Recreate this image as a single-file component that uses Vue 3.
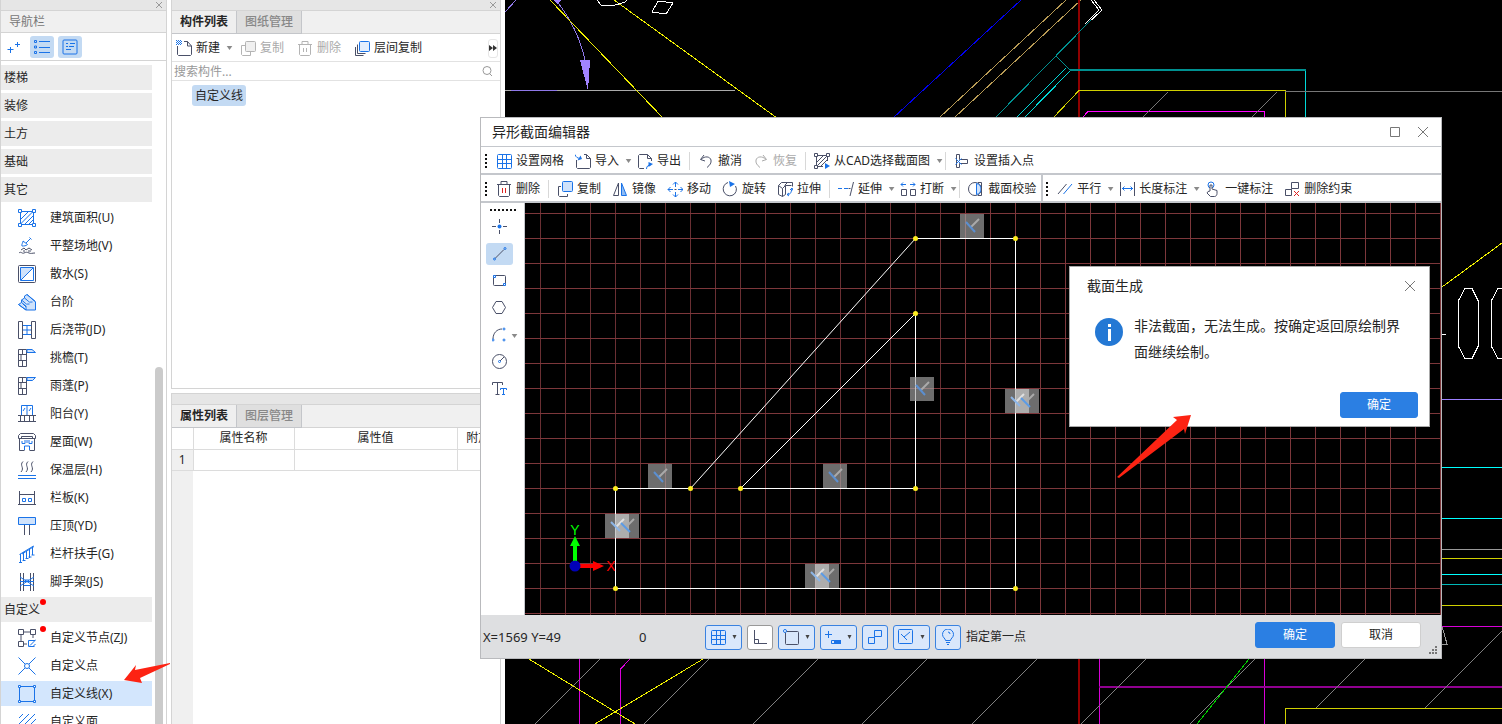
<script setup>
import { ref } from 'vue'

const B = '#1a73e8'
const K = '#4a5068'
const G = '#b4b4b4'
const F = '#cfe2fb'

const navIcons = {
  area: `<path stroke="${B}" d="M2.5 3.500v11M15.500 3.500v11M3.500 2.500h11M3.500 15.500h11M3 10l7-7M3 14.500L14.500 3M7 15l8-8M11 15l4-4"/><path fill="#fff" stroke="${B}" d="M.5.5h3v3h-3zM14.500.5h3v3h-3zM.5 14.500h3v3h-3zM14.500 14.500h3v3h-3z"/>`,
  ground: `<path stroke="${B}" d="M8 6l5-5M11.500.5l2 2M5 5c-1 2-1.500 3-1 4 2 0 4 0 5.500-1.500L5 4z"/><path stroke="${K}" d="M1 16c2-2 3 1 5 0s3-1 5 0 3 0 6 0M3 13l3-2 2 2 3-2 3 2M5 14h2M10 14h3"/>`,
  apron: `<rect x=".5" y=".5" width="17" height="17" rx="1" stroke="${K}"/><path fill="${F}" stroke="none" d="M3 3h12L3 15z"/><path stroke="${B}" d="M2.500 2.500h13v13h-13zM3 15L15 3"/>`,
  steps: `<path fill="${F}" stroke="${B}" d="M.5 11.500l3-2V7l3-2V3l2.500-1.500L17.500 9v8H8zM8 17v-3l-3-3M.5 11.500L8 17M3.500 9.500l5 4M3.500 7l5 4h3M6.500 5l5 4h3M9 1.500l8.500 7"/>`,
  strip: `<path stroke="${K}" d="M.5.5h4v17h-4zM13.500.5h4v17h-4z"/><path stroke="${B}" d="M5 4.500h8M5 9h8M5 13.500h8M9 4.500v9"/>`,
  cornice: `<path stroke="${K}" d="M.5.5h8v17h-8zM4.500.5v5M.5 5.500h8M3 5.500v6M.5 11.500h8M4.500 11.500v6"/><path fill="${F}" stroke="${B}" d="M9 .5h5l3.500 3H9z"/>`,
  canopy: `<path stroke="${K}" d="M.5.5h8v17h-8zM4.500.5v5M.5 5.500h8M3 5.500v6M.5 11.500h8M4.500 11.500v6"/><path fill="${F}" stroke="${B}" d="M9 .5h8.500l-3 3H9z"/>`,
  balcony: `<path stroke="${B}" d="M3.500 10V.5h11V10M9 .5V10M5 6l2-3M11 6l2-3"/><path stroke="${K}" d="M0 10.500h18M2.500 10.500v6M6.500 10.500v6M11.500 10.500v6M15.500 10.500v6M0 16.500h18"/>`,
  roof: `<path stroke="${K}" d="M2.500.5h13l2 2v3h-3v-2h-11v2h-3v-3zM1.500 5.500v12h5M16.500 5.500v12h-5M3 5.500h12"/><path stroke="${B}" d="M4 8v2.500h3V7M14 8v2.500h-3V7M9 7v3M6.500 17v-4h5v4"/>`,
  insulation: `<path stroke="${K}" d="M5 .5c-4 4 2 6-2 10.500M10 .5c-4 4 2 6-2 10.500M15 .5c-4 4 2 6-2 10.500"/><path stroke="${B}" d="M0 14.500h18M0 17.500h18"/>`,
  board: `<path stroke="${K}" d="M1.500 2v13.500M16.500 2v13.500M1.500 5.500h15M0 15.500h18"/><path stroke="${B}" d="M4.500 9.500h3v3h-3zM10.500 9.500h3v3h-3z"/>`,
  coping: `<path fill="${F}" stroke="${B}" d="M.5.5h17v7H.5z"/><path stroke="${K}" d="M6.500 8v10M11.500 8v10"/>`,
  railing: `<path stroke="${B}" d="M1.500 9.500L15.500 1M2.500 9v8M5.500 7v9M8.500 6v8M11.500 4v9M14.500 2v8M1 17.500h3M4.500 15.500h3M7.500 13.500h3M10.500 12h3M13.500 10h3M4 9l12-7.500"/>`,
  scaffold: `<path stroke="${K}" d="M2.500 0v18M5.500 0v18M12.500 0v18M15.500 0v18"/><path stroke="${B}" d="M2 4l14 9M2 13l14-9M2 8.500h14M6 12.500h6M7 7h4"/>`,
  node: `<path stroke="${K}" d="M5.500 3h7M3 5.500v7M15 5.500V9M5.500 15H9M.5.5h5v5h-5zM12.500.5h5v5h-5zM.5 12.500h5v5h-5z"/><path stroke="${B}" d="M17 11.500h-6.500v6h6M12 16.500l6-6M15 17.500l2.500-2.500"/>`,
  point: `<path stroke="${B}" d="M.5.5l6.500 6.500M11 11l6.500 6.500M17.500.5L11 7M7 11L.5 17.500"/><circle cx="9" cy="9" r="2.500" stroke="${B}"/>`,
  line: `<path stroke="${B}" d="M1.500 1.500h15v15h-15z"/><path fill="#fff" stroke="${B}" d="M.5.5h2v2h-2zM15.500.5h2v2h-2zM.5 15.500h2v2h-2zM15.500 15.500h2v2h-2z"/>`,
  face: `<path stroke="${B}" d="M1 5l4-4M1 11L11 1M1 17L17 1M6 18L18 6M12 18l6-6"/>`
}

const icons = {
  sparkle: `<path stroke="${B}" d="M4.500 8v6M1.500 10.500h6M11.500 3v5M9 5.500h5"/>`,
  list: `<path stroke="${B}" d="M.5 1.500h2v2h-2zM.5 7h2v2h-2zM.5 12.500h2v2h-2zM5 2.500h11M5 8.500h11M5 13.500h11"/>`,
  card: `<rect x="1" y="1" width="14" height="14" rx="1" stroke="${B}"/><path stroke="${B}" d="M4 4.500h2M8 4.500h5M4 7.500h2M7 7.500h5M4 10.500h5"/>`,
  fileNew: `<path stroke="${K}" d="M1.500 6v8.500l1 1h12l1-1V6l-4-4.500H8M11.500 1.500V6h4"/><path stroke="${B}" stroke-dasharray="1 1" d="M0 .5h5M1 1.500h5M0 2.500h5M1 3.500h5M0 4.500h5"/>`,
  copyOff: `<path stroke="${G}" d="M5 5.500H1.500v9l1 1h8V12"/><rect x="5.500" y="1.500" width="10" height="10" rx="1" stroke="${G}" fill="#f0f0f0"/>`,
  trashOff: `<path stroke="${G}" d="M1 4.500h14M5 4V1.500h6V4M2.500 4.500v10l1 1h9l1-1v-10M6.500 8v4M9.500 8v4"/>`,
  layers: `<path stroke="${K}" d="M3.500 4.500v9h8M1.500 7v8.500h8" /><rect x="5.500" y="1.500" width="10" height="10" rx="1" stroke="${B}" fill="#e3eefd"/>`,
  search: `<circle cx="8" cy="7.500" r="4" stroke="#999"/><path stroke="#999" d="M10.500 10.500l2.500 2.500"/>`,
  close: `<path stroke="#999" d="M1 1l6 6M7 1L1 7"/>`,
  grid: `<rect x="1.500" y="1.500" width="14" height="14" rx="1" stroke="${B}"/><path stroke="${B}" d="M6.500 1v14M10.500 1v14M1 6.500h14M1 10.500h14"/>`,
  import: `<path stroke="${K}" d="M1.500 7v7.500l1 1h12l1-1V5.500l-4-4H9M11.500 1.500v4h4"/><path stroke="${B}" d="M0 1.500c1 3 2.500 3.500 5 4"/><path fill="${B}" stroke="none" d="M7 6L2.500 7.500 5.500 2.500z"/>`,
  export: `<path stroke="${K}" d="M7 15.500H2.500l-1-1v-12l1-1h8l4 4V8M10.500 1.500v4h4"/><path stroke="${B}" d="M9.500 16c0-3 2-4 4-4"/><path fill="${B}" stroke="none" d="M16 11l-4.500-2v5z"/>`,
  undo: `<path stroke="${K}" d="M6 2L2.500 6.500 7 8M3 6.500C7 2.500 12 3.500 13 7c.5 3-1 5-4 7.500"/>`,
  redo: `<path stroke="#aaa" d="M10 2l3.500 4.500L9 8M13 6.500C9 2.500 4 3.500 3 7c-.5 3 1 5 4 7.500"/>`,
  pick: `<path stroke="${K}" d="M2.500 3v10M3 2.500h10M13.500 4v4M3 13.500h6M3 9l6-6M3 13l10-10M7 13l6-6"/><path fill="#fff" stroke="${K}" d="M.5.5h3v3h-3zM12.500.5h3v3h-3zM.5 12.500h3v3h-3z"/><path fill="${B}" stroke="none" d="M11 10l5 3-5 3z"/>`,
  insertPt: `<path stroke="${K}" d="M2.500 1.500h3v5h8v4h-8v4h-3z"/><path stroke="${B}" d="M1.500 5.500l6 6M1.500 11.500l6-6"/>`,
  trash: `<path stroke="${K}" d="M1 3.500h14M5 3V.5h6V3M2.500 3.500v11l1 1h9l1-1v-11"/><path stroke="#d22" d="M6.500 7v5M9.500 7v5"/>`,
  copy: `<path stroke="${K}" d="M4 5.500H1.500v9l1 1h8V13"/><rect x="5.500" y=".5" width="10" height="10" rx="1" stroke="${B}" fill="${F}"/>`,
  mirror: `<path stroke="${K}" d="M6.500 2v12.500h-5z"/><path stroke="${B}" fill="#8fbcf5" d="M9.500 2v12.500h5z"/>`,
  move: `<path stroke="${B}" d="M8.500 1v5M8.500 11v5M1 8.500h5M11 8.500h5M6 3.500l2.500-2.500 2.500 2.500M6 13.500l2.500 2.500 2.500-2.500M3.500 6L1 8.500 3.500 11M13.500 6L16 8.500 13.500 11"/><path stroke="${K}" d="M7.500 8.500h2"/>`,
  rotate: `<path stroke="${K}" d="M6 1.500A6.500 6.500 0 1 0 10 14.500A6.500 6.500 0 0 0 13.500 5"/><path fill="${B}" stroke="none" d="M7 0l6 3-5 3z"/>`,
  stretch: `<path stroke="${K}" d="M1.500 4.500v9l4 2v-8zM1.500 4.500l3-3h11v4M5.500 7.500l3-3h6M8.500 4.500v9M5.500 15.500l3-2M10.500 1.500l-3 3"/><path stroke="${B}" d="M10 13.500c4 0 4-2 5-6M13 9l2-2 1 2.500M12 12l-2 1.500 2 1.500"/>`,
  extend: `<path stroke="${B}" d="M0 7.500h4M6 7.500h4"/><path stroke="${K}" d="M10.500 7.500h2M15.500 1l-3.500 14"/>`,
  breakUp: `<path stroke="${K}" d="M6.500 8.500h-5v6h5zM15.500 8.500h-5v6h5z"/><path stroke="${B}" d="M1 3.500h5M10 3.500h5M3 1.500l-2 2 2 2M13 1.500l2 2-2 2"/>`,
  check: `<circle cx="7" cy="8" r="6.500" stroke="${K}"/><path fill="${F}" stroke="${B}" d="M8.500 2.500c6 1 6 10 0 11z"/><path stroke="${K}" d="M10 1.500h3.500v13H10"/>`,
  parallel: `<path stroke="${K}" d="M1 13L9.500 3"/><path stroke="${B}" d="M6.500 13L15 3"/>`,
  length: `<path stroke="${K}" d="M1.500 1v14M15.500 1v14"/><path stroke="${B}" d="M3 7.500h11M5.500 5.500l-2 2 2 2M11.500 5.500l2 2-2 2"/>`,
  touch: `<circle cx="6" cy="4" r="3" stroke="${B}"/><path stroke="${K}" fill="#fff" d="M5 10V4h2v4l5 1.500v3c0 1.500-1 3-2.500 3h-4L2 12l1-1.500z"/>`,
  unbind: `<path stroke="${K}" d="M7.500 1.500h7v6h-7zM7.500 7.500v7h-6v-6h6"/><path stroke="#d22" d="M10 10l5 5M15 10l-5 5"/>`,
  dotTool: `<path stroke="${K}" d="M7.500 0v4M7.500 11v4M0 7.500h4M11 7.500h4"/><circle cx="7.500" cy="7.500" r="2" fill="${B}" stroke="none"/>`,
  lineTool: `<path stroke="${K}" d="M3 12.500L12 3.500"/><circle cx="2.500" cy="13" r="1" stroke="${B}"/><circle cx="13" cy="2.500" r="1" stroke="${B}"/>`,
  rectTool: `<rect x="1.500" y="2.500" width="12" height="10" rx="1" stroke="${K}"/><path stroke="${B}" fill="#fff" d="M1.500 2.500h2v2h-2zM11.500 10.500h2v2h-2z"/>`,
  hexTool: `<path stroke="${K}" d="M4 1.500h6l3.500 6-3.500 6H4L.5 7.500z"/>`,
  arcTool: `<path stroke="${K}" d="M1 12C1 6 5 2 10 2"/><circle cx="1" cy="13" r="1" stroke="${B}"/><circle cx="12" cy="2" r="1" stroke="${B}"/><circle cx="12" cy="13" r="1" stroke="${B}"/>`,
  circleTool: `<circle cx="7.500" cy="7.500" r="7" stroke="${K}"/><path stroke="${K}" d="M8 7l4-4"/><circle cx="7.500" cy="7.500" r="1" stroke="${B}"/>`,
  textTool: `<path stroke="${K}" d="M.5 4V1.500h10V4M5.500 1.500v12M3.500 13.500h4"/><path stroke="${B}" d="M8.500 9V7.500h6V9M11.500 7.500v6M10 13.500h3"/>`,
  ortho: `<path stroke="${K}" d="M2.500 1v13.500H15M2.500 10.500h4v4"/>`,
  snapRect: `<rect x="2.500" y="2.500" width="13" height="13" rx="1" stroke="${K}"/><circle cx="2" cy="2" r="1.500" stroke="${B}" fill="#fff"/>`,
  dynInput: `<path stroke="${B}" d="M3.500 2v7M0 5.500h7M6.500 11.500h9v3h-9z"/><path fill="${B}" stroke="none" d="M9 11h7v4H9z"/>`,
  link: `<path stroke="${B}" d="M7.500 1.500h7v6h-7zM7.500 7.500v7h-6v-6h6"/>`,
  constraint: `<rect x=".5" y=".5" width="14" height="14" rx="1" stroke="${B}"/><path stroke="${B}" d="M3 5l6 6M6 8l6-5"/>`,
  bulb: `<path stroke="${B}" d="M5.500 11.500c0-2-3-3-3-6a5.500 5.500 0 0 1 11 0c0 3-3 4-3 6zM6 13.500h4M7 15.500h2M8 3a2 2 0 0 1 2 2"/>`
}

const groups = ['楼梯', '装修', '土方', '基础', '其它']
const others = [
  { icon: 'area', text: '建筑面积(U)' },
  { icon: 'ground', text: '平整场地(V)' },
  { icon: 'apron', text: '散水(S)' },
  { icon: 'steps', text: '台阶' },
  { icon: 'strip', text: '后浇带(JD)' },
  { icon: 'cornice', text: '挑檐(T)' },
  { icon: 'canopy', text: '雨蓬(P)' },
  { icon: 'balcony', text: '阳台(Y)' },
  { icon: 'roof', text: '屋面(W)' },
  { icon: 'insulation', text: '保温层(H)' },
  { icon: 'board', text: '栏板(K)' },
  { icon: 'coping', text: '压顶(YD)' },
  { icon: 'railing', text: '栏杆扶手(G)' },
  { icon: 'scaffold', text: '脚手架(JS)' }
]
const customs = [
  { icon: 'node', text: '自定义节点(ZJ)', dot: true },
  { icon: 'point', text: '自定义点' },
  { icon: 'line', text: '自定义线(X)' },
  { icon: 'face', text: '自定义面' }
]
const selected = ref('自定义线(X)')

const listTools = [
  { icon: 'fileNew', text: '新建', caret: true },
  { icon: 'copyOff', text: '复制', off: true },
  { icon: 'trashOff', text: '删除', off: true },
  { icon: 'layers', text: '层间复制' }
]
const fileTools = [
  { icon: 'grid', text: '设置网格' },
  { icon: 'import', text: '导入', caret: true },
  { icon: 'export', text: '导出' },
  { sep: true },
  { icon: 'undo', text: '撤消' },
  { icon: 'redo', text: '恢复', off: true },
  { sep: true },
  { icon: 'pick', text: '从CAD选择截面图', caret: true },
  { sep: true },
  { icon: 'insertPt', text: '设置插入点' }
]
const editTools = [
  { icon: 'trash', text: '删除' },
  { sep: true },
  { icon: 'copy', text: '复制' },
  { icon: 'mirror', text: '镜像' },
  { icon: 'move', text: '移动' },
  { icon: 'rotate', text: '旋转' },
  { icon: 'stretch', text: '拉伸' },
  { sep: true },
  { icon: 'extend', text: '延伸', caret: true },
  { icon: 'breakUp', text: '打断', caret: true },
  { sep: true },
  { icon: 'check', text: '截面校验' }
]
const markTools = [
  { icon: 'parallel', text: '平行', caret: true },
  { icon: 'length', text: '长度标注', caret: true },
  { icon: 'touch', text: '一键标注' },
  { icon: 'unbind', text: '删除约束' }
]
const drawTools = ['dotTool', 'lineTool', 'rectTool', 'hexTool', 'arcTool', 'circleTool', 'textTool']
const drawTool = ref('lineTool')
const snapTools = [
  { icon: 'grid', caret: true },
  { icon: 'ortho', off: true },
  { icon: 'snapRect', caret: true },
  { icon: 'dynInput', caret: true },
  { icon: 'link' },
  { icon: 'constraint', caret: true },
  { icon: 'bulb' }
]

const keyword = ref('')

// section outline, on the 25px grid
const vertices = [
  [615, 488], [690, 488], [915, 238], [1015, 238], [1015, 588], [615, 588],
  [740, 488], [915, 313], [915, 488]
]
const marks = [[648, 464], [823, 464], [910, 377], [960, 214]]
const doubleMarks = [[605, 514], [805, 564], [1005, 389]]
const gridX = Array.from({ length: 37 }, (_, i) => 540 + i * 25)
const gridY = Array.from({ length: 17 }, (_, i) => 213 + i * 25)
</script>

<template>
  <div class="workspace">
    <aside class="nav">
      <div class="grip">
        <button class="close" aria-label="关闭"><svg viewBox="0 0 8 8" v-html="icons.close"></svg></button>
      </div>
      <h2 class="nav-title">导航栏</h2>
      <div class="nav-tools">
        <button class="sq" aria-label="新增"><svg viewBox="0 0 16 16" v-html="icons.sparkle"></svg></button>
        <button class="sq on" aria-label="列表"><svg viewBox="0 0 16 16" v-html="icons.list"></svg></button>
        <button class="sq on" aria-label="卡片"><svg viewBox="0 0 16 16" v-html="icons.card"></svg></button>
      </div>
      <div class="nav-body">
        <div class="nav-list">
          <div v-for="g in groups" :key="g" class="group">{{ g }}</div>
          <button v-for="o in others" :key="o.text" class="entry" @click="selected = o.text">
            <svg viewBox="0 0 18 18" v-html="navIcons[o.icon]"></svg>{{ o.text }}
          </button>
          <div class="group">自定义<i class="dot"></i></div>
          <button
            v-for="o in customs"
            :key="o.text"
            class="entry"
            :class="{ selected: selected === o.text }"
            @click="selected = o.text"
          >
            <svg viewBox="0 0 18 18" v-html="navIcons[o.icon]"></svg>{{ o.text }}<i v-if="o.dot" class="dot"></i>
          </button>
        </div>
        <div class="scroll"></div>
      </div>
    </aside>

    <div class="middle">
      <section class="panel components">
        <div class="grip">
          <button class="close" aria-label="关闭"><svg viewBox="0 0 8 8" v-html="icons.close"></svg></button>
        </div>
        <div class="tabs">
          <button class="tab active">构件列表</button>
          <button class="tab">图纸管理</button>
        </div>
        <div class="list-tools">
          <button v-for="t in listTools" :key="t.text" class="tool" :class="{ off: t.off }">
            <svg viewBox="0 0 16 16" v-html="icons[t.icon]"></svg>{{ t.text }}<i v-if="t.caret" class="caret"></i>
          </button>
          <button class="more" aria-label="更多">
            <svg viewBox="0 0 8 8"><path d="M0 1l4 3-4 3zM4 1l4 3-4 3z" /></svg>
          </button>
        </div>
        <label class="search">
          <input v-model="keyword" type="text" placeholder="搜索构件..." aria-label="搜索构件" />
          <svg viewBox="0 0 16 16" v-html="icons.search"></svg>
        </label>
        <div class="tree"><button class="leaf">自定义线</button></div>
      </section>

      <section class="panel props">
        <div class="grip"></div>
        <div class="tabs">
          <button class="tab active">属性列表</button>
          <button class="tab">图层管理</button>
        </div>
        <table>
          <thead>
            <tr><th class="num"></th><th class="name">属性名称</th><th class="value">属性值</th><th>附加</th></tr>
          </thead>
          <tbody>
            <tr><td class="num">1</td><td></td><td></td><td></td></tr>
          </tbody>
        </table>
        <div class="gutter"></div>
      </section>
    </div>

    <main class="cad">
      <svg viewBox="505 0 997 724" preserveAspectRatio="xMinYMin slice" fill="none" shape-rendering="crispEdges">
        <path stroke="#8f78e8" d="M505 12L516 0M556 0Q578 28 585 60M511 90.500h46" />
        <path fill="#a183ff" d="M580 60h10l-2 31zM554 0h7l-4 4z" />
        <path stroke="#aaa" d="M505 90.500h6M557 90.500h178" />
        <path stroke="#f0f000" d="M550 0L663 118M614 0L777 118" />
        <path stroke="#fff" d="M597 0l4 5 11 1 13-4 2-2M658 1l15 2-7 11-14-2zM1091 0l8 10-14 14M1094 0l8 10-15 14" />
        <path stroke="#0000f0" d="M1021 0L893 118" />
        <path stroke="#b89b55" d="M1066 0L939 118M1081 0L954 118" />
        <path stroke="#900000" stroke-width="2" d="M1079 0v724" />
        <path stroke="#009090" d="M1091 20L995 118M1056 56l14 14" />
        <path stroke="#00d8d8" d="M1066 68l-50 50M1070 71l-46 47M1305.500 70v48" />
        <path stroke="#009090" stroke-width="2" d="M1070 70h236" />
        <path stroke="#d0d000" d="M1053 118l26-27.500h206.500v28" />
        <path stroke="#f0f" d="M1082 118l6-6.500h176.500v7" />
        <path stroke="#777" d="M1285 91.500h217M1168 92l-26 26M1277 92l-26 26" />
        <path stroke="#f0f000" d="M1442 287l60-44" />
        <path stroke="#fff" d="M1465 288.500h7l6 12v46l-6 12h-7l-6.500-12v-46zM1502 288.500h-4l-6.500 12v46l6.500 12h4M1442 334.500h4" />
        <path stroke="#9d80ff" d="M1442 399.500h60" />
        <path stroke="#0ff" d="M1442 467.500h60M1442 518.500h60M1442 574.500h60" />
        <path stroke="#00b8b8" d="M1442 584.500h60" />
        <path stroke="#999" d="M1442 549.500h60M1442 626l5 18h-5" />
        <path stroke="#d0d000" d="M1442 558.500h60M1442 605.500h60M1502 708.500h-216.500v16" />
        <path stroke="#d800d8" d="M1442 626.500h60M1099.500 659v65M1264.500 659v65M579.500 659v65M630 659l-9.500 10v55" />
        <path stroke="#900090" stroke-width="2" d="M1099 687h403" />
        <path stroke="#808080" d="M600 659l-65 65M709 659l-65 65M818 659l-65 65M927 659l-65 65M1037 659l-65 65M1146 659l-65 65M1255 659l-65 65M1365 659l-49 49M1502 631l-77 77" />
        <path stroke="#00d000" d="M1249 659l-52 65" />
        <path stroke="#f0f000" d="M529 659l106 65M703 659l-108 65" />
      </svg>
    </main>

    <div class="editor" role="dialog" aria-label="异形截面编辑器">
      <header class="editor-head">
        <h1>异形截面编辑器</h1>
        <button class="win" aria-label="最大化"><svg viewBox="0 0 12 12"><path d="M1.500 1.500h9v9h-9z" /></svg></button>
        <button class="win" aria-label="关闭"><svg viewBox="0 0 12 12"><path d="M1 1l10 10M11 1L1 11" /></svg></button>
      </header>
      <div class="bar">
        <div class="bar-group">
          <i class="handle"></i>
          <template v-for="(t, i) in fileTools" :key="i">
            <i v-if="t.sep" class="sep"></i>
            <button v-else class="tool" :class="{ off: t.off }">
              <svg viewBox="0 0 16 16" v-html="icons[t.icon]"></svg>{{ t.text }}<i v-if="t.caret" class="caret"></i>
            </button>
          </template>
        </div>
      </div>
      <div class="bar">
        <div class="bar-group">
          <i class="handle"></i>
          <template v-for="(t, i) in editTools" :key="i">
            <i v-if="t.sep" class="sep"></i>
            <button v-else class="tool">
              <svg viewBox="0 0 16 16" v-html="icons[t.icon]"></svg>{{ t.text }}<i v-if="t.caret" class="caret"></i>
            </button>
          </template>
        </div>
        <div class="bar-group">
          <i class="handle"></i>
          <button v-for="t in markTools" :key="t.text" class="tool">
            <svg viewBox="0 0 16 16" v-html="icons[t.icon]"></svg>{{ t.text }}<i v-if="t.caret" class="caret"></i>
          </button>
        </div>
      </div>
      <div class="editor-body">
        <div class="draw-tools">
          <i class="handle-h"></i>
          <button
            v-for="d in drawTools"
            :key="d"
            class="draw"
            :class="{ on: drawTool === d }"
            :aria-label="d"
            @click="drawTool = d"
          >
            <svg viewBox="0 0 16 16" v-html="icons[d]"></svg><i v-if="d === 'arcTool'" class="caret"></i>
          </button>
        </div>
        <div class="sheet">
          <svg viewBox="525 203 916 412" preserveAspectRatio="xMinYMin slice" fill="none">
            <path v-for="x in gridX" :key="'x' + x" :stroke="x < 960 ? '#6a2f33' : '#7d373b'" :d="`M${x + 0.5} 203V615`" />
            <path v-for="y in gridY" :key="'y' + y" stroke="#7d373b" :d="`M525 ${y + 0.5}H1441`" />
            <g transform="translate(.5 .5)" stroke="#fff">
              <path d="M615 488H690L915 238H1015V588H615z" />
              <path d="M740 488L915 313V488z" />
            </g>
            <circle v-for="v in vertices" :key="v.join()" :cx="v[0] + 0.5" :cy="v[1] + 0.5" r="2.500" fill="#ffef20" />
            <g v-for="m in marks" :key="m.join()" :transform="`translate(${m[0]} ${m[1]})`">
              <rect width="24" height="24" fill="#a8a8a8" fill-opacity=".65" />
              <path stroke="#aaa" stroke-width="2" d="M11 13l8-8" />
              <path stroke="#5b8fd0" stroke-width="2" d="M6 8l9 10" />
            </g>
            <g v-for="m in doubleMarks" :key="m.join()" :transform="`translate(${m[0]} ${m[1]})`">
              <rect width="34" height="24" fill="#a8a8a8" fill-opacity=".65" />
              <rect x="10" width="14" height="24" fill="#d0d0d0" fill-opacity=".65" />
              <path stroke="#e0e0e0" stroke-width="2" d="M11 13l8-8" />
              <path stroke="#aaa" stroke-width="2" d="M21 13l8-8" />
              <path stroke="#8db6e8" stroke-width="2" d="M6 8l9 9" />
              <path stroke="#5b9be6" stroke-width="2" d="M16 9l9 9" />
            </g>
            <path fill="#0f0" d="M573 562v-16h-3l5-10 5 10h-3v16z" />
            <path fill="#f00" d="M580 564h13v-3l11 5-11 5v-3h-13z" />
            <circle cx="575" cy="566" r="5.500" fill="#0000b8" />
            <text class="axis y" x="575" y="535">Y</text>
            <text class="axis x" x="611" y="571">X</text>
          </svg>
        </div>
      </div>
      <footer class="status">
        <span class="coord">X=1569 Y=49</span>
        <span class="angle">0</span>
        <div class="snaps">
          <button v-for="s in snapTools" :key="s.icon" class="snap" :class="{ off: s.off }" :aria-label="s.icon">
            <svg viewBox="0 0 16 16" v-html="icons[s.icon]"></svg><i v-if="s.caret" class="caret"></i>
          </button>
        </div>
        <span class="hint">指定第一点</span>
        <div class="actions">
          <button class="btn primary">确定</button>
          <button class="btn">取消</button>
        </div>
        <svg class="resize" viewBox="0 0 9 9"><path d="M6 0h2v2H6zM6 3h2v2H6zM3 3h2v2H3zM6 6h2v2H6zM3 6h2v2H3zM0 6h2v2H0z" /></svg>
      </footer>
    </div>

    <div class="message" role="alertdialog" aria-label="截面生成">
      <header>
        <h2>截面生成</h2>
        <button class="win" aria-label="关闭"><svg viewBox="0 0 12 12"><path d="M1 1l10 10M11 1L1 11" /></svg></button>
      </header>
      <div class="message-body">
        <svg viewBox="0 0 28 28"><circle cx="14" cy="14" r="14" /><path d="M13 6h3v3h-3zM13 11h3v12h-3z" /></svg>
        <p>非法截面，无法生成。按确定返回原绘制界面继续绘制。</p>
      </div>
      <footer><button class="btn primary">确定</button></footer>
    </div>

    <svg class="arrow nav-arrow" viewBox="124 660 48 26">
      <path d="M124 680l12-15-1 5 35-7v1l-30 14 2 5z" />
    </svg>
    <svg class="arrow msg-arrow" viewBox="1116 412 78 68">
      <path d="M1191 415l-18 2 4 3-60 57 2 1 65-49 1 5z" />
    </svg>
  </div>
</template>

<style>
body {
  margin: 0;
  background: #fff;
}
</style>

<style scoped>
.workspace {
  position: relative;
  display: flex;
  height: 100vh;
  overflow: hidden;
  font-family: "Noto Sans", "Noto Sans CJK SC", sans-serif;
  font-size: 12px;
  line-height: 16px;
  color: #262626;
}
.workspace * {
  box-sizing: border-box;
}
button {
  border: none;
  padding: 0;
  background: none;
  font: inherit;
  color: inherit;
  white-space: nowrap;
}
h1, h2, p {
  margin: 0;
  font-weight: 400;
}
svg {
  display: block;
  flex: none;
  fill: none;
}
.grip {
  display: flex;
  flex: none;
  justify-content: flex-end;
  align-items: center;
  height: 11px;
  padding-right: 3px;
  background: #e6e6e6;
  border-bottom: 1px solid #d4d4d4;
}
.close svg {
  width: 8px;
  height: 8px;
}
.caret {
  width: 7px;
  height: 4px;
  background: #8a8a8a;
  clip-path: polygon(10% 0, 90% 0, 50% 100%);
}
.dot {
  align-self: flex-start;
  width: 6px;
  height: 6px;
  border-radius: 50%;
  background: #f00;
}

.nav {
  display: flex;
  flex-direction: column;
  flex: none;
  width: 167px;
  border: 1px solid #d4d4d4;
  border-width: 0 1px;
}
.nav-title {
  flex: none;
  height: 22px;
  padding-left: 8px;
  border-bottom: 1px solid #d4d4d4;
  background: #f0f0f0;
  font-size: 12px;
  line-height: 21px;
  color: #777;
}
.nav-tools {
  display: flex;
  flex: none;
  align-items: center;
  gap: 4px;
  height: 28px;
  padding-left: 1px;
  border-bottom: 1px solid #d4d4d4;
}
.sq {
  display: grid;
  place-items: center;
  width: 24px;
  height: 22px;
  border-radius: 3px;
}
.sq.on {
  background: #c3daf3;
}
.sq svg {
  width: 16px;
  height: 16px;
}
.nav-body {
  display: flex;
  flex: 1;
  min-height: 0;
}
.nav-list {
  display: flex;
  flex: 1;
  flex-direction: column;
  gap: 3px;
  padding-top: 4px;
  overflow: hidden;
}
.group,
.entry {
  display: flex;
  flex: none;
  align-items: center;
  height: 25px;
}
.group {
  padding-left: 3px;
  background: #ececec;
}
.group .dot {
  margin-top: 2px;
}
.entry {
  position: relative;
  padding-left: 17px;
  text-align: left;
}
.entry.selected {
  background: #d3e6fd;
}
.entry svg {
  width: 18px;
  height: 18px;
  margin-right: 14px;
}
.entry .dot {
  position: absolute;
  left: 39px;
  top: 1px;
}
.scroll {
  width: 8px;
  margin: 306px 3px 0;
  border-radius: 4px 4px 0 0;
  background: #cbcbcb;
}

.middle {
  display: flex;
  flex-direction: column;
  flex: none;
  gap: 4px;
  width: 338px;
  padding: 0 4px;
}
.panel {
  display: flex;
  flex-direction: column;
  border: 1px solid #d4d4d4;
}
.components {
  flex: none;
  height: 389px;
  border-top: none;
}
.props {
  flex: 1;
  border-bottom: none;
}
.tabs {
  display: flex;
  flex: none;
  height: 23px;
  border-bottom: 1px solid #d4d4d4;
  background: #f0f0f0;
}
.tab {
  width: 65px;
  height: 23px;
  border: 1px solid #c4c6ca;
  border-width: 0 1px 1px 0;
  background: #dfdfdf;
  font-weight: 500;
  color: #888;
}
.tab.active {
  background: #efefef;
  font-weight: 700;
  color: #262626;
}
.list-tools {
  display: flex;
  flex: none;
  align-items: center;
  gap: 3px;
  height: 28px;
  padding-top: 1px;
  border-bottom: 1px solid #e2e2e2;
}
.tool {
  display: flex;
  flex: none;
  align-items: center;
  gap: 4px;
  height: 24px;
  padding: 0 5px;
}
.list-tools .tool {
  padding: 0 6px 0 4px;
}
.tool svg {
  width: 16px;
  height: 16px;
}
.tool.off {
  color: #aaa;
}
.tool .caret {
  margin: 0 -6px 0 2px;
}
.more {
  display: grid;
  place-items: center;
  width: 10px;
  height: 19px;
  margin: 0 2px 0 auto;
  border: 1px solid #e6e6e6;
  border-radius: 3px;
}
.more svg {
  width: 8px;
  height: 8px;
  fill: #333;
}
.search {
  display: flex;
  flex: none;
  align-items: center;
  height: 19px;
  padding: 0 5px 0 2px;
  border-bottom: 1px solid #e2e2e2;
}
.search input {
  flex: 1;
  min-width: 0;
  height: 18px;
  padding: 0;
  border: none;
  outline: none;
  font: inherit;
}
.search input::placeholder {
  color: #999;
}
.search svg {
  width: 16px;
  height: 16px;
}
.tree {
  padding: 4px 20px;
}
.leaf {
  height: 21px;
  padding: 0 3px;
  border-radius: 3px;
  background: #c3daf3;
}
table {
  width: 100%;
  table-layout: fixed;
  border-collapse: collapse;
}
th, td {
  height: 21px;
  padding: 0;
  border: 1px solid #dcdcdc;
  border-width: 0 1px 1px 0;
  font-weight: 400;
  text-align: center;
}
.num {
  width: 21px;
}
td.num {
  background: #f0f0f0;
}
.name {
  width: 101px;
}
.value {
  width: 163px;
}
.gutter {
  flex: 1;
  width: 21px;
  background: #f0f0f0;
}

.cad {
  flex: 1;
  min-width: 0;
  background: #000;
}
.cad svg {
  width: 100%;
  height: 100%;
}

.editor {
  position: absolute;
  left: 480px;
  right: 60px;
  top: 117px;
  bottom: 65px;
  display: flex;
  flex-direction: column;
  border: 1px solid #b9babd;
  background: #fff;
}
.editor-head {
  display: flex;
  flex: none;
  align-items: center;
  gap: 16px;
  height: 29px;
  padding: 0 12px 0 11px;
  border-bottom: 1px solid #c4c7cc;
}
h1 {
  flex: 1;
  font-size: 14px;
  line-height: 20px;
}
.win svg {
  width: 12px;
  height: 12px;
  stroke: #777;
}
.bar {
  display: flex;
  flex: none;
  height: 28px;
  padding-left: 1px;
  border-bottom: 2px solid #c4c7cc;
}
.bar-group {
  display: flex;
  align-items: center;
  gap: 1px;
  padding-top: 2px;
}
.bar-group + .bar-group {
  border-left: 2px solid #c4c7cc;
}
.handle {
  width: 2px;
  height: 14px;
  margin: 0 3px;
  background: repeating-linear-gradient(#111 0 2px, transparent 2px 4px);
}
.sep {
  width: 1px;
  height: 18px;
  margin: 0 2px;
  background: #d8d8d8;
}
.editor-body {
  display: flex;
  flex: 1;
  min-height: 0;
}
.draw-tools {
  display: flex;
  flex: none;
  flex-direction: column;
  gap: 5px;
  width: 44px;
  padding: 6px 0 0 5px;
  border-right: 1px solid #c4c7cc;
}
.handle-h {
  width: 26px;
  height: 2px;
  margin-left: 4px;
  background: repeating-linear-gradient(90deg, #111 0 2px, transparent 2px 4px);
}
.draw {
  position: relative;
  display: grid;
  flex: none;
  place-items: center;
  width: 27px;
  height: 22px;
  border-radius: 3px;
}
.draw.on {
  background: #c3daf3;
}
.draw svg {
  width: 16px;
  height: 16px;
}
.draw .caret {
  position: absolute;
  left: 25px;
  top: 10px;
}
.sheet {
  flex: 1;
  min-width: 0;
  background: #000;
}
.sheet svg {
  width: 100%;
  height: 100%;
}
.axis {
  font-family: "Liberation Sans", sans-serif;
  font-size: 14px;
  text-anchor: middle;
}
.axis.y {
  fill: #0f0;
}
.axis.x {
  fill: #f00;
}
.status {
  position: relative;
  display: flex;
  flex: none;
  align-items: center;
  height: 43px;
  padding: 1px 20px 0 2px;
  background: #dedfe1;
}
.coord,
.angle {
  font-size: 13px;
}
.coord {
  width: 156px;
}
.angle {
  width: 66px;
}
.snaps {
  display: flex;
  gap: 5px;
}
.snap {
  display: flex;
  align-items: center;
  justify-content: center;
  gap: 6px;
  height: 25px;
  padding: 0 4px;
  border: 1px solid #3a82e0;
  border-radius: 3px;
  background: #d9e7fb;
}
.snap.off {
  border-color: #999;
  background: #fff;
}
.snap svg {
  width: 16px;
  height: 16px;
}
.snap .caret {
  width: 5px;
  background: #444;
}
.hint {
  margin-left: 5px;
}
.actions {
  display: flex;
  gap: 6px;
  margin: 0 0 4px auto;
}
.btn {
  width: 80px;
  height: 26px;
  border: 1px solid #cfcfcf;
  border-radius: 3px;
  background: #fff;
}
.btn.primary {
  border-color: #2b7fe3;
  background: #2b7fe3;
  color: #fff;
}
.resize {
  position: absolute;
  right: 3px;
  bottom: 3px;
  width: 9px;
  height: 9px;
  fill: #777;
}

.message {
  position: absolute;
  right: 72px;
  top: 266px;
  width: 361px;
  height: 161px;
  display: flex;
  flex-direction: column;
  border: 1px solid #aaa;
  background: #fff;
  font-size: 14px;
}
.message header {
  display: flex;
  align-items: center;
  justify-content: space-between;
  height: 38px;
  padding: 0 13px 0 17px;
}
.message h2 {
  font-size: 14px;
}
.message-body {
  display: flex;
  flex: 1;
  gap: 11px;
  padding: 8px 24px 0 25px;
}
.message-body svg {
  width: 28px;
  height: 28px;
  margin-top: 5px;
}
.message-body circle {
  fill: #2478d4;
}
.message-body path {
  fill: #fff;
}
.message-body p {
  line-height: 26px;
}
.message footer {
  display: flex;
  justify-content: flex-end;
  padding: 0 11px 8px 0;
  font-size: 12px;
}
.message .btn {
  width: 78px;
}
.arrow {
  position: absolute;
  pointer-events: none;
  fill: #fd2313;
}
.nav-arrow {
  left: 124px;
  top: 660px;
  width: 48px;
  height: 26px;
}
.msg-arrow {
  right: 308px;
  top: 412px;
  width: 78px;
  height: 68px;
}
</style>
